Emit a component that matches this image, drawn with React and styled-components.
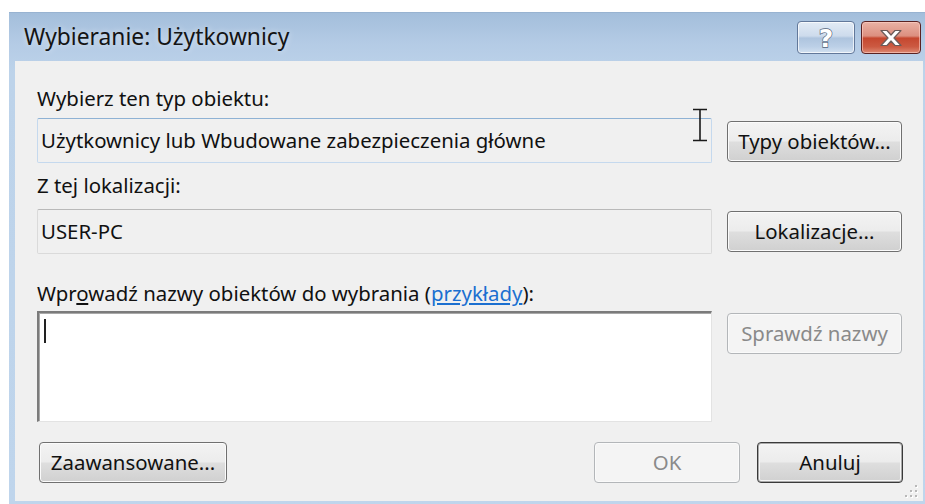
import styled, { createGlobalStyle } from "styled-components";

const GlobalStyle = createGlobalStyle`
  html, body {
    margin: 0;
    background: #ffffff;
    overflow: hidden;
  }
  body {
    font-family: "Noto Sans", "Open Sans", sans-serif;
  }
`;

const Window = styled.div`
  margin: 12px 0 0 9px;
  width: 920px;
  padding: 0 6px 6px;
  box-sizing: border-box;
  background: linear-gradient(180deg, #a3bedb 0px, #b4cbe5 30px, #bdd3ea 60px, #bfd5ec 100%);
  border-top: 1px solid #98b3d1;
`;

const TitleBar = styled.div`
  height: 48px;
  display: flex;
  align-items: center;
  justify-content: space-between;
  padding: 0 2px 0 9px;
`;

const TitleText = styled.span`
  font-size: 22.8px;
  color: #141414;
  margin-top: -2px;
  text-shadow: 0 0 6px rgba(255, 255, 255, 0.6);
`;

const CaptionButtons = styled.div`
  display: flex;
  gap: 6px;
  margin-top: 1px;
`;

const CaptionButton = styled.div`
  width: ${({ $w }) => $w}px;
  height: 33px;
  box-sizing: border-box;
  border-radius: 4px;
  display: flex;
  align-items: center;
  justify-content: center;
  border: 1px solid ${({ $close }) => ($close ? "#5a2222" : "#62789a")};
  box-shadow: inset 0 0 0 1px ${({ $close }) => ($close ? "rgba(255,210,200,0.6)" : "rgba(255,255,255,0.7)")};
  background: ${({ $close }) =>
    $close
      ? "linear-gradient(180deg, #eab2a5 0%, #dc8f7f 45%, #c5472f 52%, #cc5a42 80%, #dd8a74 100%)"
      : "linear-gradient(180deg, #e2ebf5 0%, #cddbec 45%, #aec4de 52%, #bcd0e7 80%, #d3e1f0 100%)"};
`;

const HelpGlyph = styled.span`
  font-family: "DejaVu Sans", sans-serif;
  font-weight: bold;
  font-size: 25px;
  line-height: 1;
  color: #ffffff;
  -webkit-text-stroke: 1.3px #4f6077;
  paint-order: stroke fill;
  margin-top: 1px;
`;

const Client = styled.div`
  position: relative;
  background: #f0f0f0;
  height: 440px;
  padding: 25px 21px 0 22px;
  box-sizing: border-box;
  font-size: 20.4px;
  color: #111;
`;

const Label = styled.div`
  line-height: 24px;
  height: 24px;
  margin-top: ${({ $top }) => $top || 0}px;
  margin-bottom: ${({ $gap }) => $gap}px;
  white-space: nowrap;
`;

const Row = styled.div`
  display: grid;
  grid-template-columns: 675px 175px;
  column-gap: 15px;
  align-items: start;
`;

const Field = styled.div`
  position: relative;
  height: 45px;
  box-sizing: border-box;
  padding: 0 0 2px 3px;
  display: flex;
  align-items: center;
  background: #f0f0f0;
  border: 1px solid ${({ $focus }) => ($focus ? "#c5d9ee" : "#dadada")};
  border-top-color: ${({ $focus }) => ($focus ? "#8fb2d4" : "#b9b9b9")};
  border-radius: 2px;
  white-space: nowrap;
`;

const NamesBox = styled.div`
  height: 111px;
  box-sizing: border-box;
  background: #ffffff;
  border-top: 2px solid #7b7b7b;
  border-left: 2px solid #7b7b7b;
  border-right: 1px solid #e3e3e3;
  border-bottom: 1px solid #e3e3e3;
  box-shadow: inset 1px 1px 0 #a8a8a8;
  padding: 6px 0 0 5px;
`;

const Caret = styled.div`
  width: 2px;
  height: 24px;
  background: #222;
`;

const Button = styled.div`
  height: 41px;
  box-sizing: border-box;
  margin-top: ${({ $offset }) => $offset || 0}px;
  width: ${({ $w }) => ($w ? `${$w}px` : "auto")};
  display: flex;
  align-items: center;
  justify-content: center;
  padding-bottom: 2px;
  border-radius: 4px;
  white-space: nowrap;
  color: #111;
  border: 1px solid #707070;
  box-shadow: inset 0 0 0 1px #fbfbfb;
  background: linear-gradient(180deg, #f3f3f3 0%, #ececec 48%, #dedede 52%, #d0d0d0 100%);

  ${({ $disabled }) =>
    $disabled &&
    `
    color: #8a8a8a;
    border-color: #b3b6b9;
    box-shadow: inset 0 0 0 1px #fafafa;
    background: #f4f4f4;
  `}

  ${({ $default }) =>
    $default &&
    `
    border-color: #3a3a3a;
    box-shadow: inset 0 0 0 1px #a9a9a9, inset 0 0 0 2px #f6f6f6;
  `}
`;

const Footer = styled.div`
  margin-top: 20px;
  padding-left: 2px;
  display: flex;
  justify-content: space-between;
  align-items: center;
`;

const FooterRight = styled.div`
  display: flex;
  gap: 17px;
  margin-right: -1px;
`;

const Link = styled.span`
  color: #1b6fd0;
  text-decoration: underline;
`;

const Cursor = styled.svg`
  position: absolute;
  left: 654px;
  top: -11px;
`;

const Grip = styled.svg`
  position: absolute;
  right: 4px;
  bottom: 2px;
`;

function CloseIcon() {
  return (
    <svg width="26" height="18" viewBox="0 0 26 18">
      <polygon
        points="3,1.5 9,1.5 13,6 17,1.5 23,1.5 16,9 23,16.5 17,16.5 13,12 9,16.5 3,16.5 10,9"
        fill="#ffffff"
        stroke="#6b5a58"
        strokeWidth="1.2"
        strokeLinejoin="round"
      />
    </svg>
  );
}

function IBeam() {
  return (
    <Cursor width="16" height="34" viewBox="0 0 16 34">
      <path d="M1 1.5h14M1 32.5h14M8 1.5v31" stroke="#1a1a1a" strokeWidth="1.6" fill="none" />
    </Cursor>
  );
}

function SizeGrip() {
  const dots = [
    [11, 1],
    [11, 6],
    [6, 6],
    [11, 11],
    [6, 11],
    [1, 11],
  ];
  return (
    <Grip width="15" height="15" viewBox="0 0 15 15">
      {dots.map(([x, y]) => (
        <g key={`${x}-${y}`}>
          <rect x={x + 1} y={y + 1} width="2" height="2" fill="#ffffff" />
          <rect x={x} y={y} width="2" height="2" fill="#b8b8b8" />
        </g>
      ))}
    </Grip>
  );
}

export default function App() {
  return (
    <>
      <GlobalStyle />
      <Window>
        <TitleBar>
          <TitleText>Wybieranie: Użytkownicy</TitleText>
          <CaptionButtons>
            <CaptionButton $w={58}>
              <HelpGlyph>?</HelpGlyph>
            </CaptionButton>
            <CaptionButton $w={60} $close>
              <CloseIcon />
            </CaptionButton>
          </CaptionButtons>
        </TitleBar>

        <Client>
          <Label $gap={8}>Wybierz ten typ obiektu:</Label>
          <Row>
            <Field $focus>
              Użytkownicy lub Wbudowane zabezpieczenia główne
              <IBeam />
            </Field>
            <Button $offset={3}>Typy obiektów...</Button>
          </Row>

          <Label $top={10} $gap={12}>Z tej lokalizacji:</Label>
          <Row>
            <Field>USER-PC</Field>
            <Button $offset={2}>Lokalizacje...</Button>
          </Row>

          <Label $top={27} $gap={6}>
            Wpr<u>o</u>wadź nazwy obiektów do wybrania (<Link>przykłady</Link>):
          </Label>
          <Row>
            <NamesBox>
              <Caret />
            </NamesBox>
            <Button $offset={2} $disabled>
              Sprawdź nazwy
            </Button>
          </Row>

          <Footer>
            <Button $w={188}>Zaawansowane...</Button>
            <FooterRight>
              <Button $w={146} $disabled>
                OK
              </Button>
              <Button $w={146} $default>
                Anuluj
              </Button>
            </FooterRight>
          </Footer>

          <SizeGrip />
        </Client>
      </Window>
    </>
  );
}
